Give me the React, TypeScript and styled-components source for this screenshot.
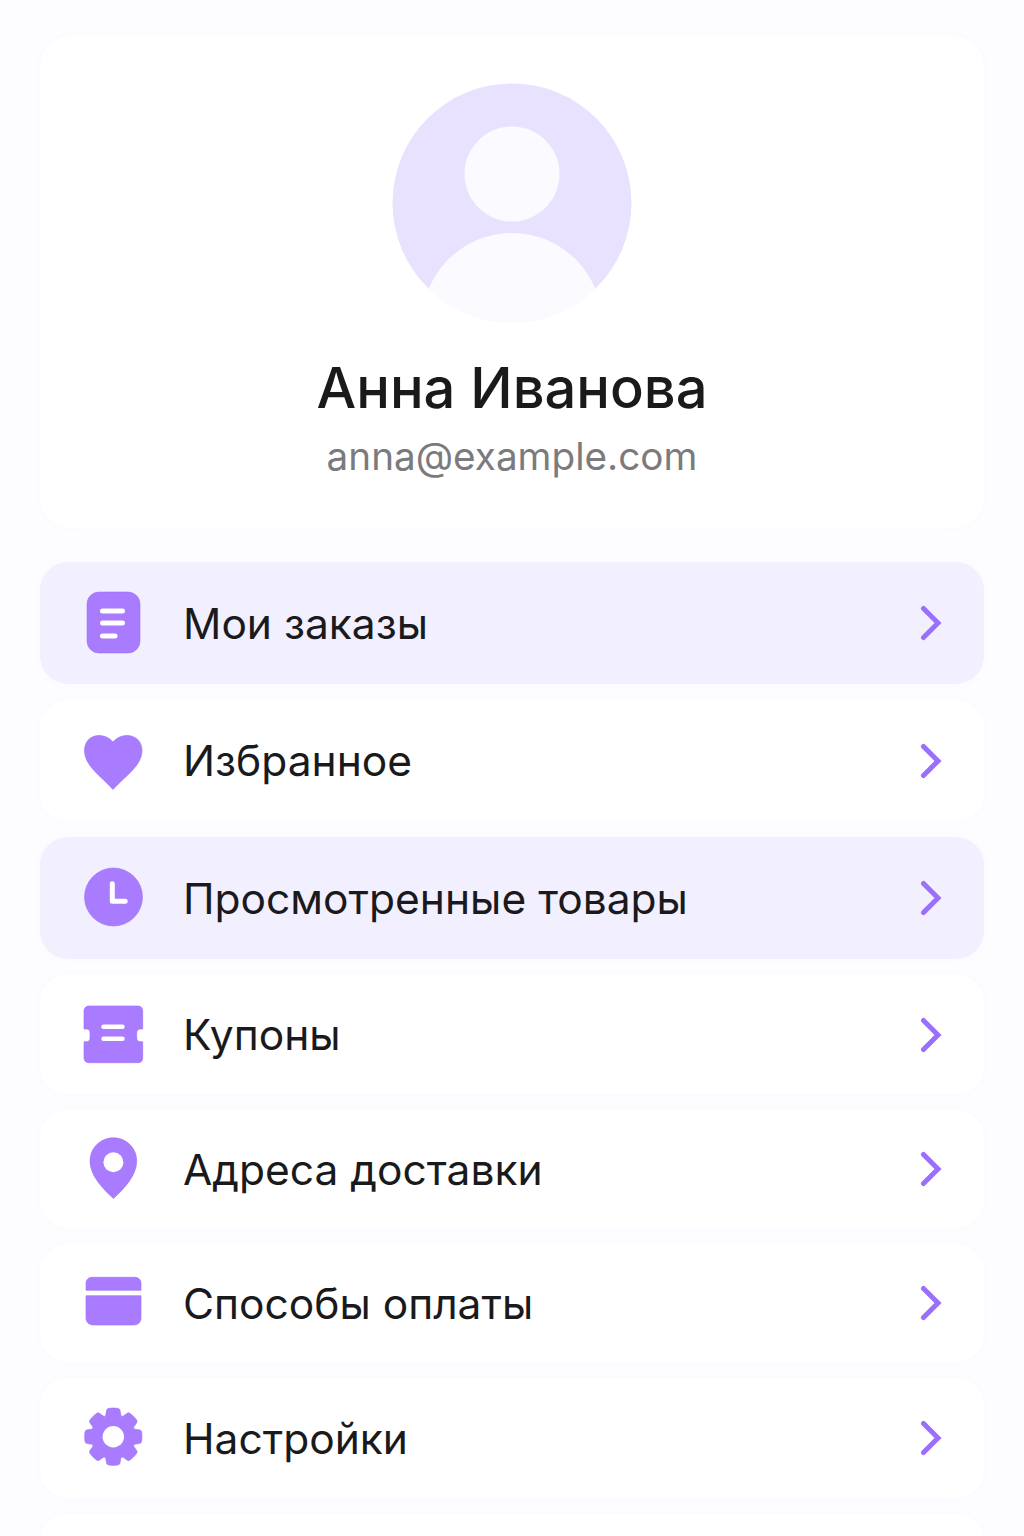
import React from "react";
import styled, { createGlobalStyle } from "styled-components";

const Global = createGlobalStyle`
  html, body { margin: 0; padding: 0; background: #fdfcff; }
  body { font-family: Inter, "Noto Sans", sans-serif; }
`;
const Page = styled.div`
  width: 1024px; height: 1536px; box-sizing: border-box; overflow: hidden;
  background: #fdfcff; padding: 36px 40px 0; display: flex; flex-direction: column;
`;
const ProfileCard = styled.section`
  height: 492px; flex: none; box-sizing: border-box; background: #fff; border-radius: 32px;
  padding-top: 47px; margin-bottom: 34px; display: flex; flex-direction: column; align-items: center;
  box-shadow: 0 0 14px rgba(120, 100, 220, 0.015);
`;
const Name = styled.h1`
  margin: 27px 0 0; font-size: 56px; line-height: 76px; font-weight: 500; color: #1a1a1c; letter-spacing: 0;
`;
const Email = styled.div`
  margin-top: 3px; font-size: 38.7px; line-height: 54px; font-weight: 400; color: #7b7b7e;
`;
const Menu = styled.nav`
  display: flex; flex-direction: column; gap: 16px; flex: none;
`;
const IconBox = styled.svg`
  width: 60px; height: 64px; flex: none; overflow: visible; margin-right: 40px;
  fill: #a87bff; stroke: #9a6ff5; stroke-width: 0.6;
`;
const Chevron = styled.svg`
  width: 24px; height: 36px; flex: none; fill: none; stroke: #9b6ffa; stroke-width: 5;
  stroke-linecap: round; stroke-linejoin: miter;
`;
const Row = styled.div<{ $active?: boolean; $h: number }>`
  height: ${p => p.$h}px; flex: none; box-sizing: border-box; border-radius: 28px;
  background: ${p => (p.$active ? "#f2effe" : "#fff")};
  box-shadow: 0 0 14px rgba(120, 100, 220, 0.015);
  padding: 0 42px 0 44px; display: flex; align-items: center; color: #1a1a1c;
  ${IconBox}, ${Chevron} {
    filter: ${p => (p.$active ? "drop-shadow(0 0 0.6px #fff)" : "none")};
  }
`;
const Label = styled.span`
  flex: 1; margin-left: -1px; padding-top: 1px; font-size: 42.5px; line-height: 56px; font-weight: 400; color: #1a1a1c;
`;
const Avatar = () => (
  <svg width="240" height="240" viewBox="0 0 240 240">
    <defs><clipPath id="av"><circle cx="120" cy="120" r="120" /></clipPath></defs>
    <circle cx="120" cy="120" r="119.500" fill="#e9e2fe" />
    <circle cx="120" cy="91" r="47.500" fill="#fbfaff" />
    <ellipse cx="120" cy="240" rx="90" ry="90" fill="#fbfaff" clipPath="url(#av)" />
  </svg>
);
const white = { fill: "#fff", stroke: "none" };
const line = { fill: "none", stroke: "#fff", strokeWidth: 5, strokeLinecap: "round" as const };
const Doc = () => (
  <IconBox viewBox="0 0 60 64">
    <rect x="3" y="1" width="53" height="61" rx="12" />
    <path d="M18.500 20H38.500M18.500 32H38.500M18.500 45H31" style={line} />
  </IconBox>
);
const Heart = () => (
  <IconBox viewBox="0 0 60 64">
    <path d="M29 13C25 8.500 20 6.500 15 6.500C6 6.500 0.500 13 0.500 21.500C0.500 37 17 47 29 60.500C41 47 58 37 58 21.500C58 13 52 6.500 43 6.500C38 6.500 33 8.500 29 13Z" />
  </IconBox>
);
const Clock = () => (
  <IconBox viewBox="0 0 60 64">
    <circle cx="29.500" cy="31" r="29" />
    <path d="M28.300 17.700V35.200H41.200" style={{ ...line, strokeLinejoin: "round" }} />
  </IconBox>
);
const Ticket = () => (
  <IconBox viewBox="0 0 60 64">
    <path d="M5 3H54C57 3 58.700 5 58.700 8V26H56.500C54 26 52.700 28 52.700 30V35C52.700 37 54 38.700 56.500 38.700H58.700V55C58.700 58 57 59.700 54 59.700H5C2 59.700 0 58 0 55V38.700H2.500C5 38.700 6 37 6 35V30C6 28 5 26 2.500 26H0V8C0 5 2 3 5 3Z" />
    <path d="M19.500 23.700H38.500M19.500 35.700H38.500" style={{ ...line, strokeWidth: 4.500 }} />
  </IconBox>
);
const Pin = () => (
  <IconBox viewBox="0 0 60 64">
    <path d="M29.400 0.800C16.500 0.800 6 11 6 24C6 39 20 53 29.400 61.500C38.800 53 52.700 39 52.700 24C52.700 11 42.300 0.800 29.400 0.800Z" />
    <circle cx="29.400" cy="25.200" r="10" style={white} />
  </IconBox>
);
const CardIcon = () => (
  <IconBox viewBox="0 0 60 64">
    <path d="M8 6.300H51C54.500 6.300 57 8.800 57 12.300V19.300H2V12.300C2 8.800 4.500 6.300 8 6.300Z" />
    <path d="M2 24.700H57V47C57 51 54 54 50 54H9C5 54 2 51 2 47Z" />
  </IconBox>
);
const gearPath = (() => {
  const cx = 29.3, cy = 30.7;
  const pt = (deg: number, r: number) => {
    const t = ((deg - 90) * Math.PI) / 180;
    return `${(cx + r * Math.cos(t)).toFixed(2)} ${(cy + r * Math.sin(t)).toFixed(2)}`;
  };
  let d = "";
  for (let i = 0; i < 8; i++) {
    const a = i * 45;
    d += `${i === 0 ? "M" : "L"}${pt(a - 19, 23)} `;
    d += `L${pt(a - 15, 26.5)} Q${pt(a - 14, 28.8)} ${pt(a - 9, 28.7)} `;
    d += `Q${pt(a, 29)} ${pt(a + 9, 28.7)} Q${pt(a + 14, 28.8)} ${pt(a + 15, 26.5)} `;
    d += `L${pt(a + 19, 23)} Q${pt(a + 22.5, 21)} ${pt(a + 26, 23)} `;
  }
  return d + "Z";
})();
const Gear = () => (
  <IconBox viewBox="0 0 60 64">
    <path d={gearPath} />
    <circle cx="29.300" cy="30.700" r="10.700" style={white} />
  </IconBox>
);
const items = [
  { label: "Мои заказы", Icon: Doc, active: true, h: 122 },
  { label: "Избранное", Icon: Heart, h: 121 },
  { label: "Просмотренные товары", Icon: Clock, active: true, h: 122 },
  { label: "Купоны", Icon: Ticket, h: 119 },
  { label: "Адреса доставки", Icon: Pin, h: 118 },
  { label: "Способы оплаты", Icon: CardIcon, h: 118 },
  { label: "Настройки", Icon: Gear, h: 120 },
  { label: "", h: 120 },
];
export default function App() {
  return (
    <Page>
      <Global />
      <ProfileCard>
        <Avatar />
        <Name>Анна Иванова</Name>
        <Email>anna@example.com</Email>
      </ProfileCard>
      <Menu>
        {items.map((it, i) => (
          <Row key={i} $active={it.active} $h={it.h}>
            {it.Icon && <it.Icon />}
            {it.Icon && <Label>{it.label}</Label>}
            {it.Icon && (
              <Chevron viewBox="0 0 24 36">
                <path d="M5.500 3.500L20 18L5.500 32.500" />
              </Chevron>
            )}
          </Row>
        ))}
      </Menu>
    </Page>
  );
}
